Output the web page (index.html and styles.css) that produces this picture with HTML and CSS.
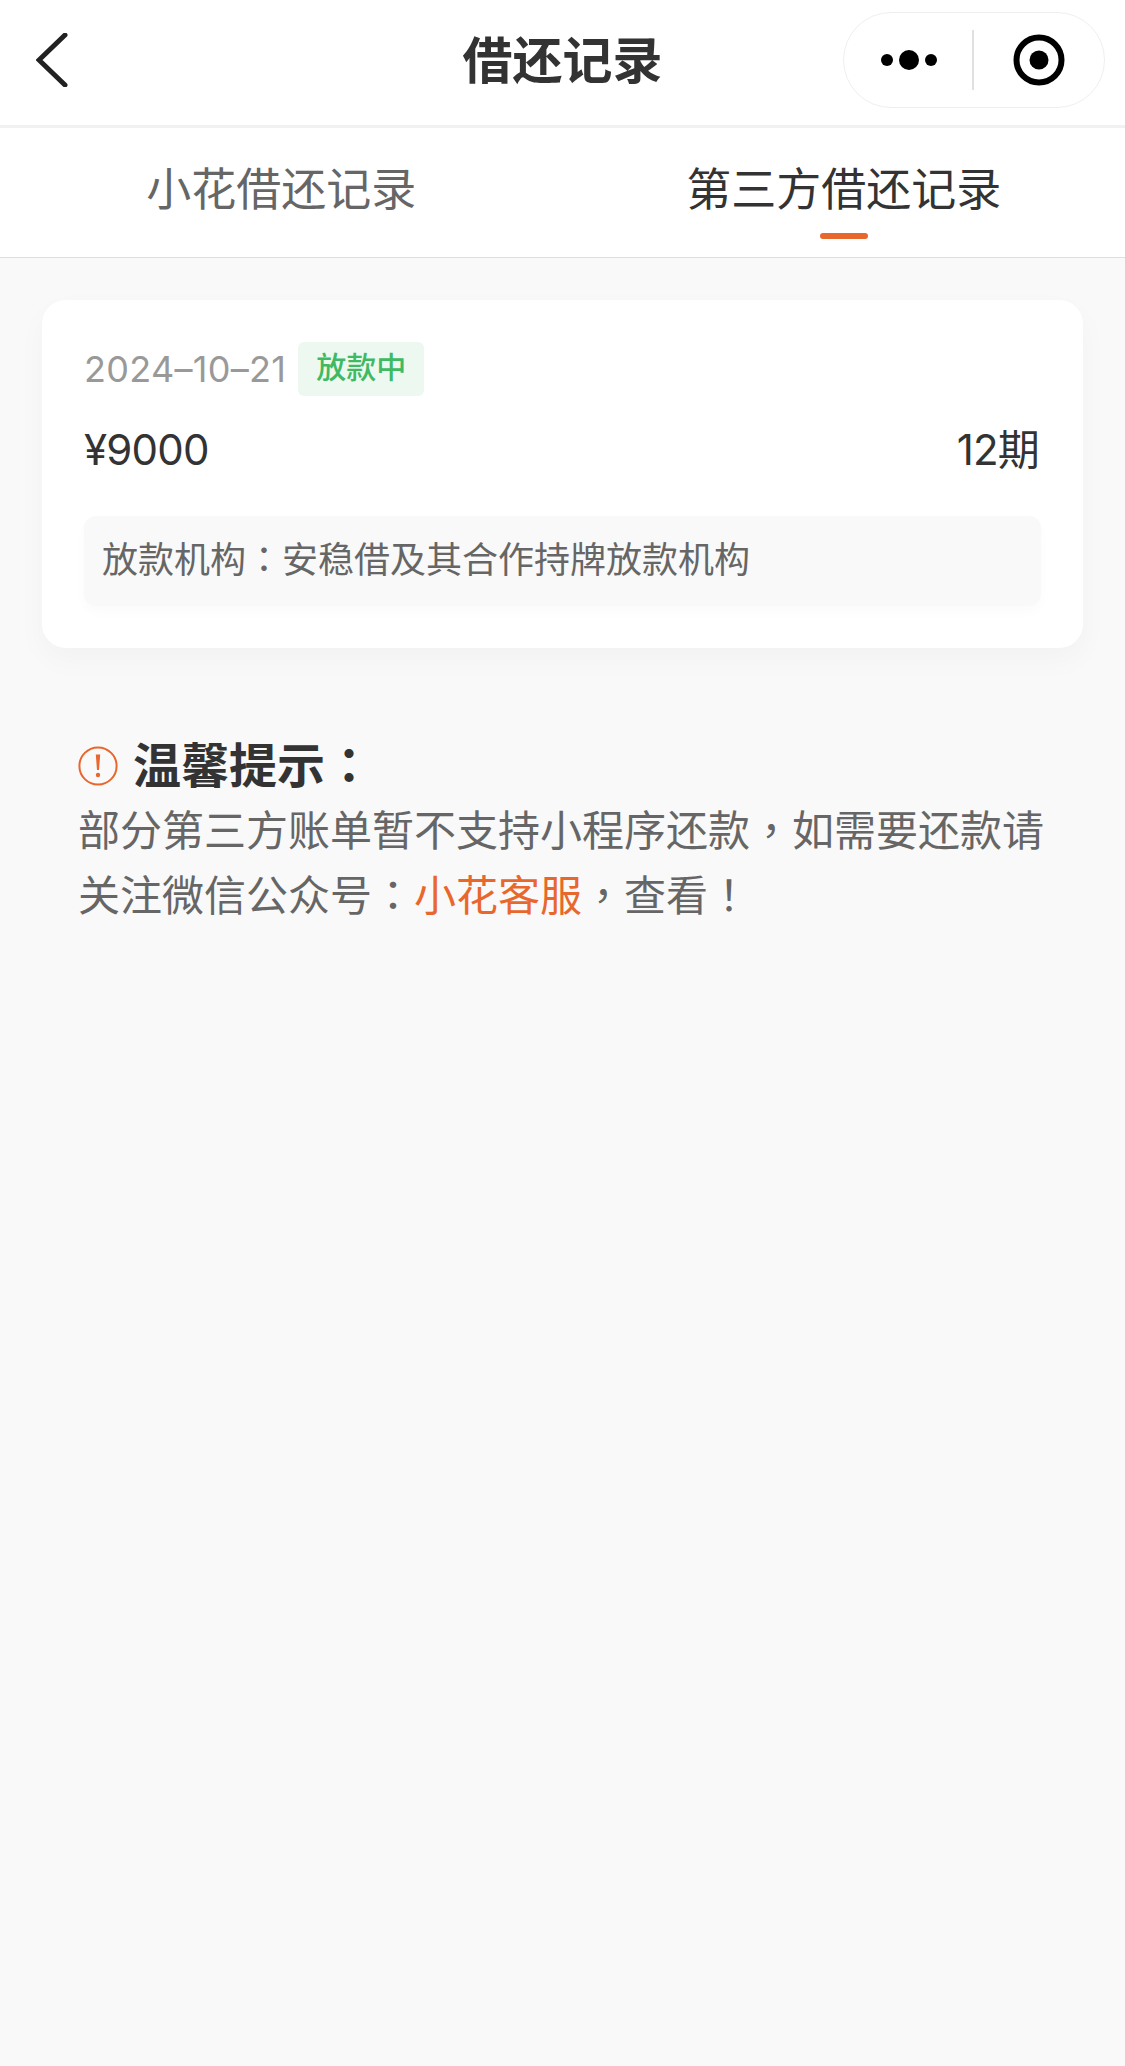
FILE: index.html
```html
<!DOCTYPE html>
<html lang="zh-CN">
<head>
  <meta charset="UTF-8" />
  <title>借还记录</title>
  <link rel="stylesheet" href="styles.css">
</head>
<body>
  <header class="nav">
    <svg class="nav-back" width="32" height="54" viewBox="0 0 32 54" aria-label="返回">
      <path d="M29 2 L3 27 L29 52" fill="none" stroke="#222" stroke-width="5" stroke-linecap="round" stroke-linejoin="miter" />
    </svg>
    <h1 class="nav-title">借还记录</h1>
    <div class="capsule">
      <svg class="capsule-more" width="60" height="24" viewBox="0 0 60 24">
        <circle cx="8" cy="12" r="6" />
        <circle cx="30" cy="12" r="10" />
        <circle cx="52" cy="12" r="6" />
      </svg>
      <span class="capsule-line"></span>
      <svg class="capsule-close" width="52" height="52" viewBox="0 0 52 52">
        <circle cx="26" cy="26" r="22.5" fill="none" stroke="#000" stroke-width="6" />
        <circle cx="26" cy="26" r="9.5" />
      </svg>
    </div>
  </header>

  <nav class="tabs">
    <div class="tab">小花借还记录</div>
    <div class="tab tab-active">第三方借还记录</div>
  </nav>

  <main class="content">
    <section class="card">
      <div class="card-top">
        <span class="card-date">2024–10–21</span>
        <span class="card-tag">放款中</span>
      </div>
      <div class="card-row">
        <span class="card-amount">¥9000</span>
        <span class="card-term">12期</span>
      </div>
      <div class="card-note">放款机构<span class="punct" lang="zh-TW">：</span>安稳借及其合作持牌放款机构</div>
    </section>

    <section class="tip">
      <div class="tip-head">
        <svg class="tip-icon" width="40" height="40" viewBox="0 0 40 40">
          <circle cx="20" cy="20" r="18.6" fill="none" stroke="#e8672c" stroke-width="2" />
          <path d="M17.8 8.5 H22.2 L21 24 H19 Z" fill="#e8672c" />
          <circle cx="20" cy="29" r="2.2" fill="#e8672c" />
        </svg>
        <span>温馨提示<span class="punct" lang="zh-TW">：</span></span>
      </div>
      <p class="tip-text">部分第三方账单暂不支持小程序还款<span class="punct" lang="zh-TW">，</span>如需要还款请<br>关注微信公众号<span class="punct" lang="zh-TW">：</span><span class="tip-link">小花客服</span><span class="punct" lang="zh-TW">，</span>查看<span class="punct" lang="zh-TW">！</span></p>
    </section>
  </main>
</body>
</html>
```

FILE: styles.css
```css
:root {
  --orange: #e8672c;
  --text-dark: #333333;
  --text-gray: #666666;
  --page-bg: #f9f9f9;
}
* {
  box-sizing: border-box;
}
body {
  margin: 0;
  min-height: 100vh;
  background-color: var(--page-bg);
  color: var(--text-dark);
  font-family: Inter, "Noto Sans CJK SC", sans-serif;
  text-spacing-trim: space-all;
}
/* centred full-width punctuation */
.punct {
  font-family: "Noto Sans CJK TC", sans-serif;
  line-height: 0;
}
.nav {
  display: grid;
  grid-template-columns: 1fr auto 1fr;
  align-items: center;
  height: 128px;
  padding: 0 20px 6px 20px;
  background-color: #fff;
  border-bottom: 3px solid #f1f1f1;
}
.nav-back {
  justify-self: start;
  margin-left: 16px;
}
.nav-title {
  margin: 2px 0 0;
  font-size: 50px;
  font-weight: 700;
  line-height: 1;
  color: var(--text-dark);
}
.capsule {
  justify-self: end;
  display: flex;
  align-items: center;
  width: 262px;
  height: 96px;
  border: 1px solid #efefef;
  border-radius: 48px;
  padding-left: 35px;
}
.capsule-line {
  width: 2px;
  height: 60px;
  margin: 0 39px 0 33px;
  background-color: #e0e0e0;
}
.tabs {
  display: flex;
  height: 130px;
  background-color: #fff;
  border-bottom: 1px solid #dedede;
}
.tab {
  flex: 1;
  position: relative;
  padding-top: 30px;
  text-align: center;
  font-size: 45px;
  line-height: 64px;
  color: var(--text-gray);
}
.tab-active {
  color: var(--text-dark);
}
.tab-active::after {
  content: "";
  position: absolute;
  left: 50%;
  top: 105px;
  width: 48px;
  height: 6px;
  margin-left: -24px;
  border-radius: 3px;
  background-color: var(--orange);
}
.content {
  padding: 42px 42px 0;
}
.card {
  height: 348px;
  padding: 42px 42px 0;
  background-color: #fff;
  border-radius: 24px;
  box-shadow: 0 12px 30px rgba(0, 0, 0, 0.03);
}
.card-top {
  display: flex;
  align-items: center;
  gap: 12px;
  height: 54px;
}
.card-date {
  font-size: 36px;
  letter-spacing: 0.3px;
  color: #999;
}
.card-tag {
  width: 126px;
  height: 54px;
  border-radius: 6px;
  background-color: #edf8f1;
  color: #3fba62;
  font-size: 30px;
  font-weight: 500;
  line-height: 50px;
  text-align: center;
}
.card-row {
  display: flex;
  justify-content: space-between;
  margin-top: 24px;
  font-size: 42px;
  line-height: 60px;
}
.card-amount {
  letter-spacing: -0.8px;
}
.card-term {
  letter-spacing: -0.8px;
  margin-right: 2px;
}
.card-note {
  height: 90px;
  margin-top: 36px;
  padding: 0 18px;
  border-radius: 12px;
  background-color: #f9f9f9;
  box-shadow: 0 6px 12px rgba(0, 0, 0, 0.02);
  color: var(--text-gray);
  font-size: 36px;
  line-height: 88px;
}
.tip {
  margin-top: 86px;
  padding: 0 36px;
}
.tip-head {
  display: flex;
  align-items: center;
  gap: 15px;
  font-size: 48px;
  font-weight: 700;
  line-height: 64px;
}
.tip-text {
  margin: 0;
  font-size: 42px;
  line-height: 65px;
  color: var(--text-gray);
}
.tip-link {
  color: var(--orange);
}
```
